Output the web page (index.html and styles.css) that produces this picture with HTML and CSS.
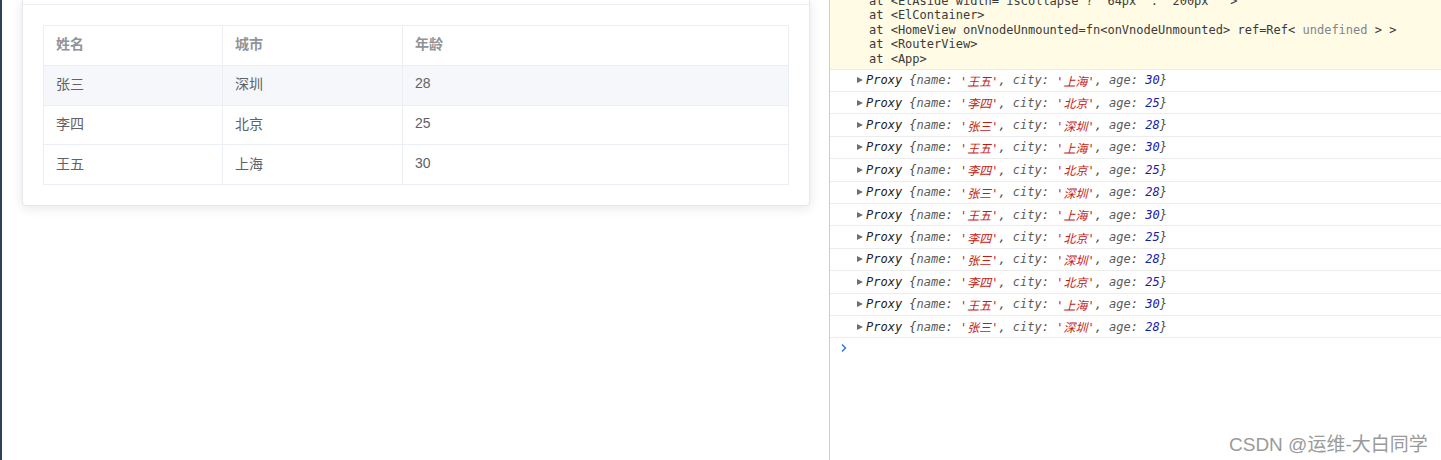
FILE: index.html
```html
<!DOCTYPE html>
<html lang="zh">
<head>
<meta charset="utf-8">
<title>Table and console</title>
<link rel="stylesheet" href="styles.css">
</head>
<body>
<div class="page">
  <div class="app">
    <div class="sidebar-edge"></div>
    <main class="main">
      <section class="card">
        <div class="card-header"></div>
        <div class="card-body">
          <table class="grid">
            <colgroup>
              <col class="c1"><col class="c2"><col class="c3">
            </colgroup>
            <thead>
              <tr><th>姓名</th><th>城市</th><th>年龄</th></tr>
            </thead>
            <tbody>
              <tr class="hover"><td>张三</td><td>深圳</td><td>28</td></tr>
              <tr><td>李四</td><td>北京</td><td>25</td></tr>
              <tr><td>王五</td><td>上海</td><td>30</td></tr>
            </tbody>
          </table>
        </div>
      </section>
    </main>
  </div>
  <aside class="console">
    <div class="warn">
      <div class="wl">at &lt;ElAside width="isCollapse ? '64px' : '200px'" &gt;</div>
      <div class="wl">at &lt;ElContainer&gt;</div>
      <div class="wl">at &lt;HomeView onVnodeUnmounted=fn&lt;onVnodeUnmounted&gt; ref=Ref&lt; <span class="undef">undefined</span> &gt; &gt;</div>
      <div class="wl">at &lt;RouterView&gt;</div>
      <div class="wl">at &lt;App&gt;</div>
    </div>
    <div class="log"><span class="tri"></span><span class="p">Proxy</span> {<span class="k">name</span>: <span class="s">'王五'</span>, <span class="k">city</span>: <span class="s">'上海'</span>, <span class="k">age</span>: <span class="n">30</span>}</div>
    <div class="log"><span class="tri"></span><span class="p">Proxy</span> {<span class="k">name</span>: <span class="s">'李四'</span>, <span class="k">city</span>: <span class="s">'北京'</span>, <span class="k">age</span>: <span class="n">25</span>}</div>
    <div class="log"><span class="tri"></span><span class="p">Proxy</span> {<span class="k">name</span>: <span class="s">'张三'</span>, <span class="k">city</span>: <span class="s">'深圳'</span>, <span class="k">age</span>: <span class="n">28</span>}</div>
    <div class="log"><span class="tri"></span><span class="p">Proxy</span> {<span class="k">name</span>: <span class="s">'王五'</span>, <span class="k">city</span>: <span class="s">'上海'</span>, <span class="k">age</span>: <span class="n">30</span>}</div>
    <div class="log"><span class="tri"></span><span class="p">Proxy</span> {<span class="k">name</span>: <span class="s">'李四'</span>, <span class="k">city</span>: <span class="s">'北京'</span>, <span class="k">age</span>: <span class="n">25</span>}</div>
    <div class="log"><span class="tri"></span><span class="p">Proxy</span> {<span class="k">name</span>: <span class="s">'张三'</span>, <span class="k">city</span>: <span class="s">'深圳'</span>, <span class="k">age</span>: <span class="n">28</span>}</div>
    <div class="log"><span class="tri"></span><span class="p">Proxy</span> {<span class="k">name</span>: <span class="s">'王五'</span>, <span class="k">city</span>: <span class="s">'上海'</span>, <span class="k">age</span>: <span class="n">30</span>}</div>
    <div class="log"><span class="tri"></span><span class="p">Proxy</span> {<span class="k">name</span>: <span class="s">'李四'</span>, <span class="k">city</span>: <span class="s">'北京'</span>, <span class="k">age</span>: <span class="n">25</span>}</div>
    <div class="log"><span class="tri"></span><span class="p">Proxy</span> {<span class="k">name</span>: <span class="s">'张三'</span>, <span class="k">city</span>: <span class="s">'深圳'</span>, <span class="k">age</span>: <span class="n">28</span>}</div>
    <div class="log"><span class="tri"></span><span class="p">Proxy</span> {<span class="k">name</span>: <span class="s">'李四'</span>, <span class="k">city</span>: <span class="s">'北京'</span>, <span class="k">age</span>: <span class="n">25</span>}</div>
    <div class="log"><span class="tri"></span><span class="p">Proxy</span> {<span class="k">name</span>: <span class="s">'王五'</span>, <span class="k">city</span>: <span class="s">'上海'</span>, <span class="k">age</span>: <span class="n">30</span>}</div>
    <div class="log"><span class="tri"></span><span class="p">Proxy</span> {<span class="k">name</span>: <span class="s">'张三'</span>, <span class="k">city</span>: <span class="s">'深圳'</span>, <span class="k">age</span>: <span class="n">28</span>}</div>
    <div class="prompt">
      <svg width="8" height="10" viewBox="0 0 8 10"><path d="M2 1.5 L5.5 5 L2 8.5" fill="none" stroke="#2d7be5" stroke-width="1.5"/></svg>
    </div>
  </aside>
  <div class="watermark">CSDN @运维-大白同学</div>
</div>
</body>
</html>
```

FILE: styles.css
```css
* { box-sizing: border-box; }
html, body { margin: 0; padding: 0; }
body {
  width: 1441px;
  height: 460px;
  overflow: hidden;
  background: #fff;
  font-family: "Liberation Sans", "Noto Sans CJK SC", sans-serif;
}
.page {
  position: relative;
  display: flex;
  width: 1441px;
  height: 460px;
}
.app {
  display: flex;
  width: 829px;
  flex: none;
  height: 100%;
}
.sidebar-edge {
  width: 2px;
  background: #304156;
  flex: none;
}
.main {
  flex: 1;
  padding: 0 20px;
}
.card {
  margin-top: -1px;
  background: #fff;
  border: 1px solid #e4e7ed;
  border-top: none;
  border-radius: 0 0 4px 4px;
  box-shadow: 0 2px 12px 0 rgba(0, 0, 0, 0.1);
}
.card-header {
  height: 6px;
  border-bottom: 1px solid #ebeef5;
}
.card-body {
  padding: 20px;
}
.grid {
  width: 745px;
  border-collapse: collapse;
  table-layout: fixed;
  font-size: 14px;
  font-family: "Liberation Sans", "Noto Sans CJK SC", sans-serif;
}
.c1 { width: 179px; }
.c2 { width: 180px; }
.c3 { width: 386px; }
.grid th, .grid td {
  height: 39.75px;
  padding: 0 12px 4px;
  text-align: left;
  border: 1px solid #ebeef5;
  vertical-align: middle;
}
.grid th {
  color: #909399;
  font-weight: bold;
}
.grid td {
  color: #606266;
}
.grid tr.hover td {
  background: #f5f7fa;
}
.console {
  flex: 1;
  border-left: 1px solid #cbcdd1;
  font-family: "DejaVu Sans Mono", "Noto Sans CJK SC", monospace;
  font-size: 12px;
  overflow: hidden;
}
.warn {
  margin-top: -6px;
  background: #fffbe5;
  border-bottom: 1px solid #fbefc0;
  padding: 0 0 2.6px 39px;
  color: #3a3a3a;
  line-height: 14.4px;
}
.wl { white-space: pre; }
.undef { color: #80868b; }
.log {
  display: flex;
  align-items: center;
  height: 22.4px;
  padding-left: 27px;
  border-bottom: 1px solid #ececec;
  font-style: italic;
  color: #4a4a4a;
  white-space: pre;
}
.tri {
  width: 0;
  height: 0;
  border-left: 6px solid #6e6e6e;
  border-top: 3.5px solid transparent;
  border-bottom: 3.5px solid transparent;
  margin-right: 3px;
  flex: none;
}
.p { color: #222; }
.k { color: #5a5a5a; }
.s { color: #c41a16; }
.n { color: #1a1aa6; }
.prompt {
  height: 20px;
  padding-left: 10px;
  display: flex;
  align-items: center;
}
.watermark {
  position: absolute;
  left: 1229px;
  top: 429px;
  font-family: "Liberation Sans", "Noto Sans CJK SC", sans-serif;
  font-size: 19px;
  color: #9a9a9a;
  text-shadow: 0 0 1px #fff;
  white-space: nowrap;
}
```
